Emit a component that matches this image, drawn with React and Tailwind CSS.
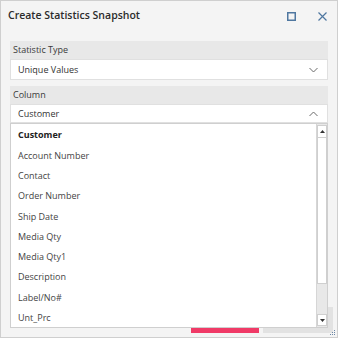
import React from 'react';

const items = [
  'Customer',
  'Account Number',
  'Contact',
  'Order Number',
  'Ship Date',
  'Media Qty',
  'Media Qty1',
  'Description',
  'Label/No#',
  'Unt_Prc',
];

const Chevron = ({ up }) => (
  <svg width="9" height="6" viewBox="0 0 9 6" fill="none" stroke="#6b6b6b" strokeWidth="1">
    {up ? <path d="M0.5 5 L4.5 1 L8.5 5" /> : <path d="M0.5 1 L4.5 5 L8.5 1" />}
  </svg>
);

export default function App() {
  return (
    <div
      className="relative w-[338px] h-[338px] bg-[#f4f4f4] border border-[#cfcfcf] text-[#333] overflow-hidden"
      style={{ fontFamily: '"Open Sans", "Noto Sans", sans-serif' }}
    >
      {/* Title bar */}
      <div className="flex items-center h-[30px] pl-[7px] pr-[10px]">
        <span className="text-[10.5px] font-semibold text-[#2b2b2b]">Create Statistics Snapshot</span>
        <div className="ml-auto flex items-center gap-[22px]">
          <svg width="9" height="9" viewBox="0 0 9 9">
            <rect x="0.75" y="0.75" width="7.5" height="7.5" fill="none" stroke="#4f77a0" strokeWidth="1.5" />
          </svg>
          <svg width="9" height="9" viewBox="0 0 9 9" stroke="#4f77a0" strokeWidth="1.2">
            <path d="M0.5 0.5 L8.5 8.5 M8.5 0.5 L0.5 8.5" />
          </svg>
        </div>
      </div>

      {/* Body */}
      <div className="px-[9px] pt-[10px]">
        <div className="h-[18px] bg-[#e8e8e8] flex items-center pl-[3px] text-[9px] text-[#3a3a3a]">Statistic Type</div>
        <div className="h-[21px] bg-white border border-[#e0e0e0] flex items-center pl-[7px] pr-[9px] text-[9px] text-[#333]">
          <span>Unique Values</span>
          <span className="ml-auto flex"><Chevron /></span>
        </div>

        <div className="mt-[6px] h-[18px] bg-[#e8e8e8] flex items-center pl-[3px] text-[9px] text-[#3a3a3a]">Column</div>
        <div className="h-[19px] bg-white border border-[#e0e0e0] flex items-center pl-[7px] pr-[9px] text-[9px] text-[#333]">
          <span>Customer</span>
          <span className="ml-auto flex"><Chevron up /></span>
        </div>
      </div>

      {/* Footer buttons (behind the open list) */}
      <div className="mt-[184px] flex justify-end gap-[4px] pr-[4px]">
        <div className="w-[68px] h-[24px] mt-[2px] bg-[#f03a67]" />
        <div className="w-[70px] h-[26px] bg-[#e2e2e2]" />
      </div>

      {/* Open dropdown list */}
      <div className="absolute left-[9px] top-[122px] w-[318px] h-[205px] bg-white border border-[#cfcfcf] flex">
        <div className="flex-1 pt-[1px]">
          {items.map((it, i) => (
            <div
              key={it}
              className={`h-[20.3px] flex items-center pl-[7px] text-[9px] ${i === 0 ? 'font-bold text-[#222]' : 'text-[#444]'}`}
            >
              {it}
            </div>
          ))}
        </div>
        <div className="w-[11px] flex flex-col bg-[#e8e8e8] border-l border-[#d6d6d6] py-[1px]">
          <div className="h-[13px] bg-white border border-[#cfcfcf] flex items-center justify-center">
            <svg width="5" height="3" viewBox="0 0 5 3"><path d="M0 3 L2.5 0 L5 3 Z" fill="#333" /></svg>
          </div>
          <div className="h-[146px] bg-white border-x border-b border-[#cfcfcf]" />
          <div className="flex-1" />
          <div className="h-[12px] bg-white border border-[#cfcfcf] flex items-center justify-center">
            <svg width="5" height="3" viewBox="0 0 5 3"><path d="M0 0 L2.5 3 L5 0 Z" fill="#333" /></svg>
          </div>
        </div>
      </div>

      {/* Resize grip */}
      <svg className="absolute right-[1px] bottom-[1px]" width="7" height="7" viewBox="0 0 7 7" fill="#6b87a6">
        <rect x="5" y="1" width="1" height="1" />
        <rect x="3" y="3" width="1" height="1" />
        <rect x="5" y="3" width="1" height="1" />
        <rect x="1" y="5" width="1" height="1" />
        <rect x="3" y="5" width="1" height="1" />
        <rect x="5" y="5" width="1" height="1" />
      </svg>
    </div>
  );
}
